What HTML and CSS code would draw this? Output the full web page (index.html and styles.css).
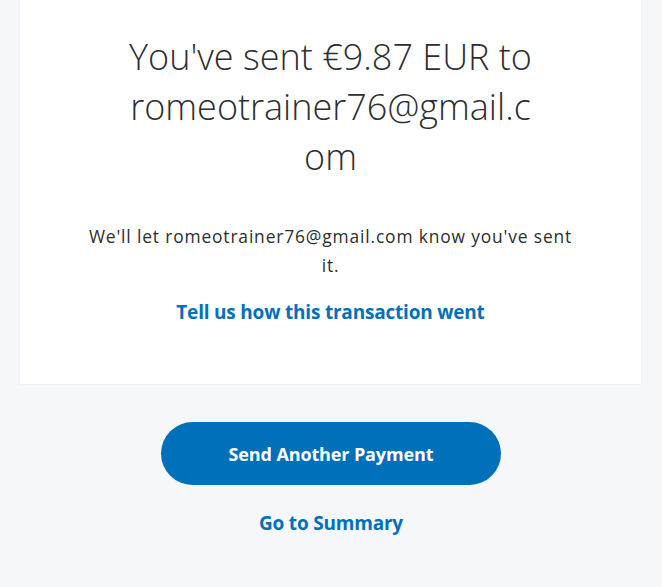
FILE: index.html
```html
<!DOCTYPE html>
<html lang="en">
<head>
<meta charset="utf-8">
<title>Payment sent</title>
<link rel="stylesheet" href="styles.css">
</head>
<body>
<main class="page">
  <section class="card">
    <h1 class="title">You've sent €9.87 EUR to romeotrainer76@gmail.com</h1>
    <p class="note">We'll let romeotrainer76@gmail.com know you've sent it.</p>
    <a class="feedback" href="#">Tell us how this transaction went</a>
  </section>
  <div class="actions">
    <a class="btn-primary" href="#">Send Another Payment</a>
    <a class="summary" href="#">Go to Summary</a>
  </div>
</main>
</body>
</html>
```

FILE: styles.css
```css
html, body {
  margin: 0;
  padding: 0;
  background: #f5f7fa;
}
body {
  font-family: "Open Sans", "Liberation Sans", sans-serif;
  color: #2c2e2f;
}
.page {
  display: flex;
  flex-direction: column;
  align-items: stretch;
}
.card {
  margin: 0 20px 0 19px;
  background: #ffffff;
  border: 1px solid #f0f2f5;
  border-top: none;
  display: flex;
  flex-direction: column;
  align-items: center;
  padding: 32px 0 60px;
}
.title {
  margin: 0;
  width: 410px;
  font-weight: 300;
  font-size: 36px;
  line-height: 50px;
  text-align: center;
  overflow-wrap: anywhere;
  color: #2c2e2f;
}
.note {
  margin: 40px 0 0;
  width: 500px;
  font-size: 17.4px;
  line-height: 29px;
  letter-spacing: 0.85px;
  text-align: center;
}
.feedback {
  margin-top: 20px;
  font-size: 19px;
  line-height: 24px;
  font-weight: 700;
  letter-spacing: -0.2px;
  color: #0070ba;
  text-decoration: none;
}
.actions {
  display: flex;
  flex-direction: column;
  align-items: center;
  padding-top: 37px;
}
.btn-primary {
  width: 340px;
  height: 63px;
  border-radius: 32px;
  background: #0070ba;
  color: #ffffff;
  font-weight: 700;
  font-size: 18px;
  letter-spacing: -0.12px;
  display: flex;
  align-items: center;
  justify-content: center;
  text-decoration: none;
}
.summary {
  margin-top: 26px;
  font-size: 19px;
  line-height: 24px;
  font-weight: 700;
  letter-spacing: -0.2px;
  color: #0070ba;
  text-decoration: none;
}
```
